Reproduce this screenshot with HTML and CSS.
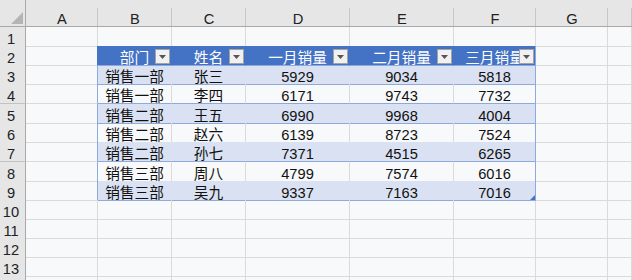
FILE: index.html
```html
<!DOCTYPE html>
<html lang="zh-CN">
<head>
    <meta charset="UTF-8">
    <title>销售表</title>
    <link rel="stylesheet" href="styles.css">
</head>
<body>
    <div class="sheet">
        <div class="row head">
            <div class="corner"><span class="tri"></span></div>
            <div class="col">A</div>
            <div class="col">B</div>
            <div class="col">C</div>
            <div class="col">D</div>
            <div class="col">E</div>
            <div class="col">F</div>
            <div class="col">G</div>
            <div class="col"></div>
        </div>
        <div class="row">
            <div class="num">1</div>
            <div class="cell"></div>
            <div class="cell top"></div>
            <div class="cell top"></div>
            <div class="cell top"></div>
            <div class="cell top"></div>
            <div class="cell top"></div>
            <div class="cell"></div>
            <div class="cell"></div>
        </div>
        <div class="row">
            <div class="num">2</div>
            <div class="cell edge-h"></div>
            <div class="cell th">部门<span class="drop"><svg width="7" height="4" viewBox="0 0 7 4"><path d="M0 0H7L3.5 4Z" fill="#555"/></svg></span></div>
            <div class="cell th">姓名<span class="drop"><svg width="7" height="4" viewBox="0 0 7 4"><path d="M0 0H7L3.5 4Z" fill="#555"/></svg></span></div>
            <div class="cell th">一月销量<span class="drop"><svg width="7" height="4" viewBox="0 0 7 4"><path d="M0 0H7L3.5 4Z" fill="#555"/></svg></span></div>
            <div class="cell th">二月销量<span class="drop"><svg width="7" height="4" viewBox="0 0 7 4"><path d="M0 0H7L3.5 4Z" fill="#555"/></svg></span></div>
            <div class="cell th last-h">三月销量<span class="drop"><svg width="7" height="4" viewBox="0 0 7 4"><path d="M0 0H7L3.5 4Z" fill="#555"/></svg></span></div>
            <div class="cell"></div>
            <div class="cell"></div>
        </div>
        <div class="row">
            <div class="num">3</div>
            <div class="cell edge"></div>
            <div class="cell band">销售一部</div>
            <div class="cell band">张三</div>
            <div class="cell band">5929</div>
            <div class="cell band">9034</div>
            <div class="cell band edge">5818</div>
            <div class="cell"></div>
            <div class="cell"></div>
        </div>
        <div class="row tall">
            <div class="num">4</div>
            <div class="cell edge"></div>
            <div class="cell plain">销售一部</div>
            <div class="cell plain">李四</div>
            <div class="cell plain">6171</div>
            <div class="cell plain">9743</div>
            <div class="cell plain edge">7732</div>
            <div class="cell"></div>
            <div class="cell"></div>
        </div>
        <div class="row">
            <div class="num">5</div>
            <div class="cell edge"></div>
            <div class="cell band">销售二部</div>
            <div class="cell band">王五</div>
            <div class="cell band">6990</div>
            <div class="cell band">9968</div>
            <div class="cell band edge">4004</div>
            <div class="cell"></div>
            <div class="cell"></div>
        </div>
        <div class="row">
            <div class="num">6</div>
            <div class="cell edge"></div>
            <div class="cell plain">销售二部</div>
            <div class="cell plain">赵六</div>
            <div class="cell plain">6139</div>
            <div class="cell plain">8723</div>
            <div class="cell plain edge">7524</div>
            <div class="cell"></div>
            <div class="cell"></div>
        </div>
        <div class="row tall">
            <div class="num">7</div>
            <div class="cell edge"></div>
            <div class="cell band">销售二部</div>
            <div class="cell band">孙七</div>
            <div class="cell band">7371</div>
            <div class="cell band">4515</div>
            <div class="cell band edge">6265</div>
            <div class="cell"></div>
            <div class="cell"></div>
        </div>
        <div class="row">
            <div class="num">8</div>
            <div class="cell edge"></div>
            <div class="cell plain">销售三部</div>
            <div class="cell plain">周八</div>
            <div class="cell plain">4799</div>
            <div class="cell plain">7574</div>
            <div class="cell plain edge">6016</div>
            <div class="cell"></div>
            <div class="cell"></div>
        </div>
        <div class="row">
            <div class="num">9</div>
            <div class="cell edge"></div>
            <div class="cell band">销售三部</div>
            <div class="cell band">吴九</div>
            <div class="cell band">9337</div>
            <div class="cell band">7163</div>
            <div class="cell band edge corner-cell">7016<span class="handle"></span></div>
            <div class="cell"></div>
            <div class="cell"></div>
        </div>
        <div class="row">
            <div class="num">10</div>
            <div class="cell"></div><div class="cell"></div><div class="cell"></div><div class="cell"></div>
            <div class="cell"></div><div class="cell"></div><div class="cell"></div><div class="cell"></div>
        </div>
        <div class="row">
            <div class="num">11</div>
            <div class="cell"></div><div class="cell"></div><div class="cell"></div><div class="cell"></div>
            <div class="cell"></div><div class="cell"></div><div class="cell"></div><div class="cell"></div>
        </div>
        <div class="row">
            <div class="num">12</div>
            <div class="cell"></div><div class="cell"></div><div class="cell"></div><div class="cell"></div>
            <div class="cell"></div><div class="cell"></div><div class="cell"></div><div class="cell"></div>
        </div>
        <div class="row">
            <div class="num">13</div>
            <div class="cell"></div><div class="cell"></div><div class="cell"></div><div class="cell"></div>
            <div class="cell"></div><div class="cell"></div><div class="cell"></div><div class="cell"></div>
        </div>
        <div class="row">
            <div class="num"></div>
            <div class="cell"></div><div class="cell"></div><div class="cell"></div><div class="cell"></div>
            <div class="cell"></div><div class="cell"></div><div class="cell"></div><div class="cell"></div>
        </div>
    </div>
</body>
</html>
```

FILE: styles.css
```css
*{
    margin:0;
    padding:0;
    box-sizing:border-box;
}
body{
    width:632px;
    height:280px;
    overflow:hidden;
    background:#f8f9fb;
    font-family:"Liberation Sans","Noto Sans CJK SC",sans-serif;
    font-size:14.67px;
    color:#111;
}
.sheet{
    width:632px;
    height:280px;
    overflow:hidden;
}
.row{
    display:grid;
    grid-template-columns:26px 72px 74px 74px 104px 104px 82px 72px 1fr;
    height:19px;
}
.row.tall{
    height:20px;
}
.head{
    height:27px;
    background:#e6e6e6;
}
.corner{
    display:flex;
    justify-content:flex-end;
    align-items:flex-end;
    padding:0 2px 2px 0;
    border-right:1px solid #a9a9a9;
    border-bottom:1px solid #a9a9a9;
}
.tri{
    width:0;
    height:0;
    border-left:12px solid transparent;
    border-bottom:12px solid #b5b5b5;
}
.col{
    text-align:center;
    line-height:14px;
    padding-top:12px;
    color:#222;
    border-bottom:1px solid #a9a9a9;
    background:linear-gradient(#c6c6c6,#c6c6c6) no-repeat right bottom/1px 18px;
}
.num{
    background:#e6e6e6;
    color:#222;
    text-align:center;
    line-height:14px;
    padding:5px 3px 0 0;
    border-right:1px solid #a9a9a9;
    border-bottom:1px solid #c2c2c2;
}
.cell{
    text-align:center;
    line-height:14px;
    padding-top:5px;
    white-space:nowrap;
    border-right:1px solid #dadada;
    border-bottom:1px solid #dadada;
}
.cell.top{
    border-bottom-color:#4472c4;
}
.cell.th{
    position:relative;
    background:#4472c4;
    color:#fff;
    border-right-color:#4472c4;
    border-bottom-color:#8ea9db;
}
.cell.edge-h{
    border-right-color:#4472c4;
}
.cell.band{
    background:#d9e1f2;
    border-right-color:#d9e1f2;
    border-bottom-color:#8ea9db;
}
.cell.plain{
    border-bottom-color:#8ea9db;
}
.cell.edge{
    border-right-color:#8ea9db;
}
.cell.last-h{
    border-right-color:#8ea9db;
}
.drop{
    position:absolute;
    right:1px;
    bottom:1px;
    width:15px;
    height:15px;
    background:#f1f1f1;
    border:1px solid #a3a3a3;
    display:flex;
    align-items:center;
    justify-content:center;
}
.corner-cell{
    position:relative;
}
.handle{
    position:absolute;
    right:0;
    bottom:0;
    width:0;
    height:0;
    border-left:5px solid transparent;
    border-bottom:5px solid #4472c4;
}
```
